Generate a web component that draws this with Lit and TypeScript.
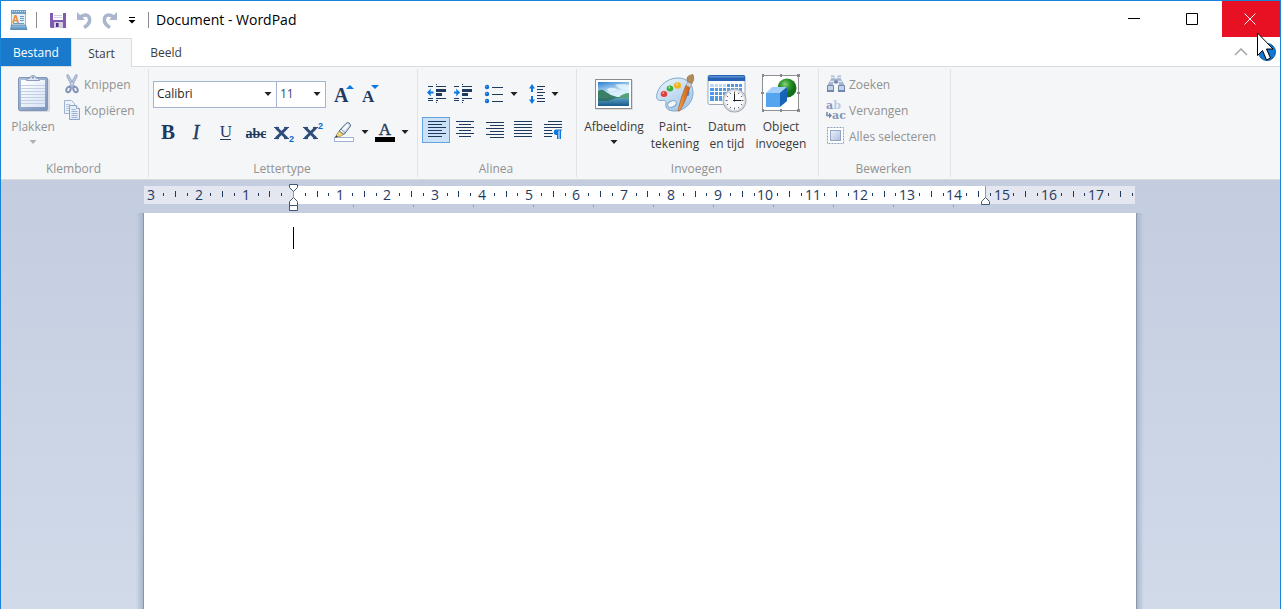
import { LitElement, html, svg, css } from "lit";
import { customElement, property } from "lit/decorators.js";

const NAVY = "#1f3a5f";
const BLUE = "#0a78e0";

const caret = (color = "#222") => html`<svg class="caret" width="8" height="4" viewBox="0 0 8 4" aria-hidden="true">
  <path d="M0.500 0h7L4 4z" fill=${color} /></svg>`;

/* Rows of text drawn as horizontal bars: [x, y, width, height] */
const bars = (rows: number[][]) =>
  rows.map(([x, y, w, h = 1]) => svg`<rect x=${x} y=${y} width=${w} height=${h} fill=${NAVY} />`);

const lines = (rows: number[][]) =>
  html`<svg width="20" height="20" viewBox="0 0 20 20" shape-rendering="crispEdges" aria-hidden="true">${bars(rows)}</svg>`;

const alignIcons = {
  left: lines([[2, 1, 18], [2, 4, 14], [2, 7, 18], [2, 10, 14], [2, 13, 18], [2, 16, 14]]),
  center: lines([[1, 1, 18], [4, 4, 12], [1, 7, 18], [4, 10, 12], [1, 13, 18], [4, 16, 12]]),
  right: lines([[2, 2, 18], [6, 5, 14], [2, 8, 18], [6, 11, 14], [2, 14, 18], [6, 17, 14]]),
  justify: lines([[1, 1, 18], [1, 4, 18], [1, 7, 18], [1, 10, 18], [1, 13, 18], [1, 16, 18]]),
};

const paragraphIcon = html`<svg width="22" height="20" viewBox="0 0 22 20" aria-hidden="true">
  <g shape-rendering="crispEdges">${bars([[7, 1, 14], [3, 4, 18], [3, 7, 18], [3, 10, 8], [3, 13, 9], [3, 16, 8]])}</g>
  <path d="M21 9.500h-6.500a3 3 0 0 0 0 5.500h1.500v4h1.500v-8.500h1v8.500h1.500v-8.500h1z" fill=${BLUE} />
</svg>`;

const indentIcon = (more: boolean) => html`<svg width="20" height="20" viewBox="0 0 20 20" aria-hidden="true">
  <g shape-rendering="crispEdges">${bars([
    [1, 2, 5], [9, 2, 10], [9, 5, 10, 3], [9, 9, 6, 3], [1, 14, 5], [9, 14, 10], [1, 16, 5], [9, 16, 2], [9, 18, 1], [9, 0, 1],
  ])}</g>
  <path d=${more ? "M7 8.500 3 4.500l.5 3H1v2h2.500l-.5 3z" : "M0 8.500l4-4-.5 3H6.500v2h-3l.5 3z"} fill=${BLUE} />
</svg>`;

const bulletsIcon = html`<svg width="20" height="20" viewBox="0 0 20 20" aria-hidden="true">
  ${[3, 10, 17].map((y) => svg`<circle cx="3" cy=${y} r="2.200" fill="#0a6cd6" /><circle cx="2.500" cy=${y - 0.5} r="0.8" fill="#6db5f5" />`)}
  <g shape-rendering="crispEdges">${bars([[8, 3, 11], [8, 10, 11], [8, 17, 11]])}</g>
</svg>`;

const spacingIcon = html`<svg width="16" height="20" viewBox="0 0 16 20" aria-hidden="true">
  <path d="M3 0l3 4.500H4V8H2V4.500H0zM3 20l3-4.500H4V12H2v3.500H0z" fill=${BLUE} />
  <g shape-rendering="crispEdges">${bars([[8, 2, 8], [8, 5, 6], [8, 8, 8], [8, 11, 6], [8, 14, 8], [8, 17, 8]])}</g>
</svg>`;

const highlightIcon = html`<svg width="22" height="22" viewBox="0 0 22 22" aria-hidden="true">
  <rect x="1.500" y="16.500" width="19" height="4" fill="#fff" stroke="#9fb3d0" />
  <path d="M6 10 13 2.500q1.500-1.500 3-.5t1.500 3L11 13.500z" fill="#dfe8f2" stroke="#49627f" />
  <path d="M8.500 10.500 15 4" stroke="#fff" stroke-width="1.500" />
  <path d="M8 8l4.500 4" stroke="#7d94b2" />
  <path d="M6 10l4.500 3.500-3.500 2-4.500.8L4 13z" fill="#f0d878" stroke="#8a8250" stroke-width=".7" />
  <path d="M2 16.500l1.300-2.200 1.500 1.500z" fill="#333" />
</svg>`;

const clipboardIcon = html`<svg width="34" height="38" viewBox="0 0 34 38" aria-hidden="true">
  <defs>
    <linearGradient id="cb" x2="1" y2="1"><stop stop-color="#aebfda" /><stop offset="1" stop-color="#7f95bb" /></linearGradient>
    <linearGradient id="cp" x2="1" y2="1"><stop stop-color="#fff" /><stop offset="1" stop-color="#d7e4f5" /></linearGradient>
  </defs>
  <rect x="3" y="5" width="31" height="33" rx="2" fill="#d5dae2" />
  <rect x="2.500" y="3.500" width="29" height="33" rx="1.500" fill="url(#cb)" stroke="#8296b9" />
  <rect x="5" y="6" width="24" height="27" fill="url(#cp)" />
  <path d="M5 11.500h24M5 14.500h24M5 17.500h24M5 20.500h24M5 23.500h24M5 26.500h24M5 29.500h24" stroke="#c1d0e6" />
  <path d="M10.500 6.500q0-2.500 3.500-2.500 .5-2.500 3-2.500t3 2.500q3.500 0 3.500 2.500z" fill="#dce5f2" stroke="#8a9dbd" />
  <circle cx="17" cy="3.500" r="1" fill="#7086aa" />
</svg>`;

const scissorsIcon = html`<svg width="18" height="20" viewBox="0 0 18 20" aria-hidden="true">
  <path d="M3 0.500 4.500 1l6 11-2 1.500L3 3zM13 .5l-1.500.5-6 11 2 1.500L13 3z" fill="#b7c6de" stroke="#92a5c3" stroke-width=".8" />
  <ellipse cx="4.500" cy="15.500" rx="2" ry="2.800" transform="rotate(25 4.500 15.500)" fill="none" stroke="#8194b7" stroke-width="2" />
  <ellipse cx="11.500" cy="15.500" rx="2" ry="2.800" transform="rotate(-25 11.500 15.500)" fill="none" stroke="#8194b7" stroke-width="2" />
</svg>`;

const copyIcon = html`<svg width="18" height="20" viewBox="0 0 18 20" aria-hidden="true">
  <path d="M.5.5h7l3 3v10H.5z" fill="#edf3fb" stroke="#9fb2d0" />
  <path d="M2 4.500h4M2 6.500h3M2 8.500h3M2 10.500h3" stroke="#b5c5de" />
  <path d="M5.500 5.500h7l3 3v11h-10z" fill="#e7effa" stroke="#8ea3c6" />
  <path d="M12.500 5.500v3h3" fill="#fff" stroke="#8ea3c6" />
  <path d="M7.500 9.500h4M7.500 11.500h6M7.500 13.500h6M7.500 15.500h6M7.500 17.500h6" stroke="#9fb2d0" />
</svg>`;

const pictureIcon = html`<svg width="38" height="40" viewBox="0 0 38 40" aria-hidden="true">
  <defs>
    <linearGradient id="sky" x2="0.300" y2="1"><stop stop-color="#2b7fd0" /><stop offset=".55" stop-color="#d8f0fb" /></linearGradient>
    <linearGradient id="sea" x2="0" y2="1"><stop stop-color="#5d9fbd" /><stop offset="1" stop-color="#175a8e" /></linearGradient>
  </defs>
  <rect x="1" y="7" width="37" height="30" fill="#d9dbdf" />
  <rect x=".5" y="6.500" width="36" height="29" fill="#fff" stroke="#8c8c8c" />
  <rect x="3" y="9" width="31" height="24" fill="url(#sky)" />
  <path d="M20 12q6-2 14 0v4q-7 2-14-4zM12 16q6-3 11 1l-9 2z" fill="#e8f6fd" opacity=".8" />
  <path d="M3 18q4-3 8 1l5 3 6 2h12v2H3z" fill="#3a7f68" />
  <path d="M24 24q5-4 10-4v5H24z" fill="#57a078" />
  <rect x="3" y="25" width="31" height="8" fill="url(#sea)" />
  <path d="M3 25h18l-8 3H3z" fill="#24654f" opacity=".7" />
</svg>`;

const paletteIcon = html`<svg width="40" height="40" viewBox="0 0 40 40" aria-hidden="true">
  <defs>
    <linearGradient id="pal" x2=".6" y2="1"><stop stop-color="#eef6fd" /><stop offset="1" stop-color="#a4c8e8" /></linearGradient>
    <linearGradient id="br" x2="1"><stop stop-color="#f6a24a" /><stop offset="1" stop-color="#c65a14" /></linearGradient>
  </defs>
  <path d="M23 5C13 5 5 12 2.500 19 .5 25 2 28 6 27.500q5-1 5 2Q9 37 18 38c11 1 20-8 20-18C38 11 32 5 23 5z" fill="url(#pal)" stroke="#7fa8cc" />
  <ellipse cx="17" cy="31" rx="4.500" ry="3" transform="rotate(-25 17 31)" fill="#f5f6f7" stroke="#7fa8cc" />
  <ellipse cx="9" cy="21" rx="3.300" ry="3" fill="#e23c3c" /><circle cx="8.300" cy="20" r="1" fill="#ff9c9c" />
  <ellipse cx="15" cy="15.500" rx="3.300" ry="3" fill="#3fae3f" /><circle cx="14.300" cy="14.500" r="1" fill="#a5e69a" />
  <ellipse cx="22.500" cy="12.500" rx="3.500" ry="3.300" fill="#f5b21a" /><circle cx="22" cy="11.500" r="1" fill="#ffe69a" />
  <ellipse cx="33" cy="20" rx="1.500" ry="3" fill="#4f93d8" />
  <path d="M33 12.500 35 14Q30 30 24.500 38q-2 1-1-2.500Q26 24 31 12z" fill="url(#br)" stroke="#a34c12" stroke-width=".6" />
  <path d="M31 12.500 33 8.500l4 2-2 4z" fill="#c9cdd2" stroke="#858b92" stroke-width=".5" />
  <path d="M32.500 8.500Q30 2.500 38 1.500q2 5-1 9z" fill="#b08c5c" stroke="#8a6a3e" stroke-width=".6" />
</svg>`;

const dateIcon = html`<svg width="40" height="40" viewBox="0 0 40 40" aria-hidden="true">
  <rect x="1" y="2.500" width="37" height="29" rx="1.500" fill="#fff" stroke="#9aa5b5" />
  <path d="M1 8V4q0-2 2-2h33q2 0 2 2v4z" fill="#2763b4" /><path d="M2 3h35v1.500H2z" fill="#5b8fd2" />
  <g shape-rendering="crispEdges">
    <path d="M3 11h16v4H3z" fill="#bfd9f5" />
    <path d="M19 11h16v4H19zM3 15h32v8H3zM3 23h14v5H3z" fill="#4f9ae6" />
    <path d="M7.500 11v17M11.500 11v17M15.500 11v17M19.500 11v12M23.500 11v12M27.500 11v12M31.500 11v12M3 14.500h32M3 18.500h32M3 22.500h32" stroke="#fff" />
  </g>
  <circle cx="27.500" cy="27.500" r="12" fill="#a5abb4" />
  <circle cx="27.500" cy="27.500" r="11" fill="#d9dde3" />
  <circle cx="27.500" cy="27.500" r="9.500" fill="#fbfcfd" />
  <path d="M27.500 18.500v2M27.500 34.500v2M18.500 27.500h2M34.500 27.500h2M23 19.700l.8 1.400M32 19.700l-.8 1.400M19.700 23l1.400.8M35.300 23l-1.400.8M19.700 32l1.400-.8M35.300 32l-1.400-.8M23 35.300l.8-1.400M32 35.300l-.8-1.400" stroke="#555" stroke-width=".9" />
  <path d="M27.500 20.500v8M26 27.500h8" stroke="#222" />
</svg>`;

const objectIcon = html`<svg width="40" height="40" viewBox="0 0 40 40" aria-hidden="true">
  <defs><radialGradient id="ball" cx=".4" cy=".3"><stop stop-color="#8ed37c" /><stop offset=".5" stop-color="#2f9a2f" /><stop offset="1" stop-color="#137018" /></radialGradient></defs>
  <rect x="1.500" y="2.500" width="36" height="35" fill="#fff" stroke="#8f8f93" />
  <g fill="#8a8a8e" shape-rendering="crispEdges">
    <path d="M1 1h2v3H1zM36 1h3v3h-3zM1 36h2v3H1zM36 36h3v3h-3zM19 1h2v3h-2zM19 36h2v3h-2zM0 19h3v2H0zM36 19h3v2h-3z" />
  </g>
  <circle cx="26" cy="15" r="9.500" fill="url(#ball)" />
  <path d="M5 20h14v14H5z" fill="#55a5ee" /><path d="M5 20l6-6h15l-7 6z" fill="#a3d0fa" /><path d="M19 20l7-6v14l-7 6z" fill="#1763b8" />
</svg>`;

const findIcon = html`<svg width="20" height="18" viewBox="0 0 20 18" aria-hidden="true">
  <path d="M5 .5h3.500v3h3v-3H15V4l3 5v4h-5V8H7v5H2V9l3-5z" fill="#a3b4cf" />
  <path d="M1.500 10.500h6v6h-6zM12.500 10.500h6v6h-6z" fill="#c5d2e5" stroke="#7187ad" />
  <path d="M5 2.500h3M12 2.500h3M4 6.500h4M12 6.500h4" stroke="#e0e8f2" stroke-width="1.500" />
  <path d="M8.500 5.500h3v3h-3z" fill="#6b82a8" /><path d="M1 16h7M12 16h7" stroke="#7187ad" stroke-width="2" />
</svg>`;

const replaceIcon = html`<svg width="20" height="22" viewBox="0 0 20 22" aria-hidden="true">
  <g font-family="'DejaVu Serif', serif" font-weight="bold" font-size="11">
    <text x="0" y="10" fill="#8095b8">a<tspan fill="#bccae0">b</tspan></text>
    <text x="6" y="20" fill="#8095b8">ac</text>
  </g>
  <path d="M1 13v3.500h3" fill="none" stroke="#7086aa" stroke-width="1.500" /><path d="M3 13.500 6 16.500l-3 3z" fill="#7086aa" />
</svg>`;

const selectAllIcon = html`<svg width="20" height="20" viewBox="0 0 20 20" aria-hidden="true">
  <defs><linearGradient id="sel" x2="1" y2="1"><stop stop-color="#edf3fb" /><stop offset="1" stop-color="#aebfdb" /></linearGradient></defs>
  <rect x="1.500" y="1.500" width="16" height="16" fill="#fff" stroke="#8ba0c0" stroke-dasharray="2 1" />
  <rect x="4.500" y="4.500" width="10" height="10" fill="url(#sel)" stroke="#91a5c7" />
</svg>`;

const appIcon = html`<svg width="18" height="20" viewBox="0 0 18 20" aria-hidden="true">
  <defs><linearGradient id="app" x2="0" y2="1"><stop stop-color="#9fc8e4" /><stop offset="1" stop-color="#4e8dbb" /></linearGradient></defs>
  <path d="M1.500 1.500h14v14h-14z" fill="#e3f0f9" stroke="#8fb9d6" />
  <path d="M1 0h15v4H1z" fill="#6d9fc4" /><path d="M2 1.500h13" stroke="#c8e4f4" stroke-dasharray="1 1" />
  <text x="2" y="13" font-family="'Liberation Sans', sans-serif" font-weight="bold" font-size="10" fill="#ef8a26">A</text>
  <path d="M10 6.500h4M10 8.500h4M10 10.500h4M3 13.500h11" stroke="#6c9cc2" />
  <path d="M1.500 15h14l1.500 4.500H.5z" fill="url(#app)" stroke="#4379a3" stroke-width=".7" />
</svg>`;

const saveIcon = html`<svg width="16" height="16" viewBox="0 0 16 16" aria-hidden="true">
  <path d="M0 1h16v15H1l-1-1z" fill="#7f5cb0" /><path d="M3 1h10v7H3z" fill="#fff" />
  <path d="M4 3.500h8M4 5.500h8" stroke="#d4cbe5" /><path d="M4 10h9v6H4z" fill="#d5cde3" /><path d="M6 11h2.500v4H6z" fill="#4e2f80" />
</svg>`;

const undoIcon = (flip = false) => html`<svg width="16" height="18" viewBox="0 0 16 18" aria-hidden="true">
  <g transform=${flip ? "translate(16 0) scale(-1 1)" : ""}>
    <path d="M4 6Q12 1.500 13.500 7.500q1 5.500-5.500 9" fill="none" stroke="#a9b6cd" stroke-width="3.500" />
    <path d="M1 1v8h8z" fill="#a9b6cd" />
  </g>
</svg>`;

/* A letter with an optional small index at its lower or upper right */
const scriptIcon = (indexY: number) => html`<svg width="22" height="26" viewBox="0 0 22 26" aria-hidden="true">
  <path d="M3 8.500 14 19.500M14 8.500 3 19.500" stroke="#2c4d7c" stroke-width="3" />
  <path d="M1 8.500h5M11 8.500h5M1 19.500h5M11 19.500h5" stroke="#2c4d7c" />
  <text x="16" y=${indexY} font-family="Liberation Sans, sans-serif" font-weight="bold" font-size="9" fill="#0a66d0">2</text>
</svg>`;

@customElement("ribbon-group")
export class RibbonGroup extends LitElement {
  @property() label = "";

  static styles = css`
    :host { display: flex; flex-direction: column; border-right: 1px solid #e2e3e4; margin: 2px 0; box-sizing: border-box; flex: none; }
    .body { flex: 1; padding-top: 2px; }
    .name { text-align: center; color: #929292; line-height: 16px; padding-right: 2px; }
  `;

  render() {
    return html`<div class="body"><slot></slot></div><div class="name">${this.label}</div>`;
  }
}

@customElement("page-ruler")
export class PageRuler extends LitElement {
  static styles = css`
    :host { display: block; height: 33px; overflow: hidden; }
    svg { display: block; }
    .num { font: 14px "Open Sans", sans-serif; fill: #1f3a5f; text-anchor: middle; }
  `;

  render() {
    const origin = 149;
    const right = 841;
    const width = 991;
    const quarter = 47.244 / 4;
    const marks = [];
    for (let i = -12; i <= 71; i++) {
      const x = Math.round(origin + i * quarter);
      if (i === 0 || x > width) continue;
      if (i % 4 === 0) marks.push(svg`<text class="num" x=${x} y="20">${Math.abs(i / 4)}</text>`);
      else if (i % 2 === 0) marks.push(svg`<rect x=${x} y="11" width="1" height="6" fill=${NAVY} />`);
      else marks.push(svg`<rect x=${x} y="13" width="1" height="3" fill=${NAVY} />`);
    }
    const stops = Array.from({ length: 11 }, (_, i) => origin + 60 * (i + 1));
    return html`<svg width="992" height="33" viewBox="0 0 992 33" role="img" aria-label="Liniaal">
      <rect x="0" y="6" width=${width} height="18" fill="#e4e7ef" />
      <rect x=${origin} y="6" width=${right - origin} height="18" fill="#fff" />
      ${marks}
      ${stops.map((x) => svg`<rect x=${x} y="25" width="1" height="2" fill="#8a9bb5" />`)}
      <path d="M149.500 11v10M841.500 6v14" stroke="#8a9bb5" />
      <g fill="#fff" stroke="#3f5878">
        <path d="M145.500 4.500h8v3l-4 4-4-4z" /><path d="M149.500 17.500l4 4v4h-8v-4z" /><path d="M145.500 25.500h8v5h-8z" />
        <path d="M841.500 17.500l4 4v3h-8v-3z" />
      </g>
    </svg>`;
  }
}

@customElement("app-root")
export class AppRoot extends LitElement {
  static styles = css`
    :host {
      display: flex; flex-direction: column; box-sizing: border-box; height: 100vh; min-height: 320px; overflow: hidden;
      border: 1px solid #1883d7; border-bottom: 0; background: #fff; color: #3c3c3c;
      font: 12px/17px "Open Sans", "Noto Sans", sans-serif; position: relative;
    }
    button, select, textarea { font: inherit; color: inherit; background: none; border: 0; padding: 0; margin: 0; border-radius: 0; }
    button { display: flex; align-items: center; justify-content: center; white-space: nowrap; }
    svg { display: block; flex: none; }
    .titlebar { display: flex; height: 37px; flex: none; }
    .quick { display: flex; align-items: center; padding-left: 9px; gap: 8px; }
    .history { display: flex; align-items: center; gap: 10px; padding-right: 4px; }
    .rule { width: 1px; height: 16px; background: #8c8c8c; margin-right: 5px; }
    .title { margin: 0; font-size: 14px; font-weight: 400; line-height: 37px; color: #000; flex: 1; padding-left: 2px; }
    .window { display: flex; }
    .window button { width: 58px; height: 36px; padding-right: 2px; }
    .window .close { background: #e81123; }
    .tabs { display: flex; height: 28px; flex: none; position: relative; }
    .tab { box-sizing: border-box; height: 28px; padding-top: 1px; }
    .file { width: 70px; background: #1979ca; color: #fff; }
    .start { width: 61px; height: 29px; background: #f5f6f7; border: 1px solid #dadbdc; border-bottom: 0; z-index: 1; }
    .view { width: 68px; }
    .side { margin-left: auto; display: flex; align-items: center; gap: 10px; padding-right: 4px; }
    .ribbon { display: flex; flex: none; height: 112px; background: #f5f6f7; border-top: 1px solid #dadbdc; border-bottom: 1px solid #dadbdc; }
    .clip { width: 148px; } .fonts { width: 269px; } .para { width: 159px; } .insert { width: 242px; } .edit { width: 132px; }
    .off { color: #929292; }
    .cols { display: flex; }
    .small { height: 26px; gap: 3px; }
    .stack { display: flex; flex-direction: column; align-items: flex-start; }
    .big { flex-direction: column; justify-content: flex-start; padding-top: 2px; gap: 5px; }
    .big .text { display: flex; flex-direction: column; align-items: center; }
    .big .caret { margin: 5px 0; }
    .paste { width: 62px; padding-top: 3px; gap: 6px; }
    .clip .cols { padding-left: 1px; }
    .clip .small { gap: 2px; }
    .row { display: flex; align-items: center; height: 26px; }
    .fonts .row { padding-left: 4px; }
    .combos { padding-top: 10px; gap: 8px; }
    .pair { display: flex; }
    .combo { display: grid; align-items: center; height: 27px; box-sizing: border-box; border: 1px solid #a3b5d0; background: #fff; }
    .combo select { grid-area: 1 / 1; appearance: none; height: 25px; padding: 0 0 2px 3px; color: #1e1e1e; outline: 0; }
    .combo .caret { grid-area: 1 / 1; justify-self: end; margin-right: 4px; pointer-events: none; }
    .family { width: 124px; } .size { width: 50px; margin-left: -1px; } .size select { color: #2b4c7e; }
    .grow { width: 20px; height: 26px; }
    .marks { padding-top: 12px; }
    .mark { width: 29px; height: 26px; }
    .split { display: flex; gap: 6px; margin-left: 6px; align-items: center; }
    .lists { padding: 10px 0 0 9px; gap: 6px; }
    .lists .split { margin-left: 5px; }
    .aligns { padding: 10px 0 0 4px; gap: 1px; }
    .align { width: 28px; height: 26px; box-sizing: border-box; border: 1px solid transparent; }
    .align.on { background: #cbe1f8; border-color: #64a2e0; }
    .insert .cols { padding-left: 5px; }
    .picture { width: 64px; } .paint { width: 58px; } .date { width: 46px; } .object { width: 62px; }
    .edit .stack { padding-left: 7px; }
    .desk { flex: 1; display: flex; flex-direction: column; align-items: center; background: linear-gradient(#c4cde0, #d0dae9); min-height: 0; padding-right: 1px; }
    .sheet { width: min(992px, 100%); display: flex; flex-direction: column; flex: 1; }
    .paper { flex: 1; display: grid; position: relative; background: #fff; }
    .paper::before, .paper::after { content: ""; position: absolute; top: 0; bottom: 0; width: 8px; }
    .paper::before { right: 100%; background: linear-gradient(to left, #8797ae 1px, #a9b7cc 1px, #a9b7cc00); }
    .paper::after { left: 100%; background: linear-gradient(to right, #8797ae 1px, #a9b7cc 1px, #a9b7cc00); }
    .paper textarea { grid-area: 1 / 1; resize: none; outline: 0; padding: 14px 149px; font: 18px/22px Lato, sans-serif; }
    .insertion { grid-area: 1 / 1; width: 1px; height: 22px; margin: 14px 149px; background: #000; pointer-events: none; }
    .pointer { position: absolute; right: 6px; top: 31px; pointer-events: none; }
  `;

  render() {
    return html`
      <header class="titlebar">
        <div class="quick">
          ${appIcon}<span class="rule"></span>
          <div class="history">
            <button aria-label="Opslaan">${saveIcon}</button>
            <button aria-label="Ongedaan maken">${undoIcon()}</button>
            <button aria-label="Opnieuw">${undoIcon(true)}</button>
            <button aria-label="Werkbalk aanpassen">
              <svg width="8" height="8" viewBox="0 0 8 8" aria-hidden="true"><path d="M1 1.500h6" stroke="#000" /><path d="M.5 4h7L4 7.500z" /></svg>
            </button>
          </div>
          <span class="rule"></span>
        </div>
        <h1 class="title">Document - WordPad</h1>
        <div class="window">
          <button aria-label="Minimaliseren"><svg width="12" height="12" viewBox="0 0 12 12"><path d="M0 5.500h12" stroke="#000" /></svg></button>
          <button aria-label="Maximaliseren"><svg width="12" height="12" viewBox="0 0 12 12"><path d="M.5.5h11v11H.5z" fill="none" stroke="#000" /></svg></button>
          <button class="close" aria-label="Sluiten"><svg width="12" height="12" viewBox="0 0 12 12"><path d="M.5.5l11 11M11.500.5l-11 11" stroke="#fff" /></svg></button>
        </div>
      </header>
      <nav class="tabs">
        <button class="tab file">Bestand</button>
        <button class="tab start">Start</button>
        <button class="tab view">Beeld</button>
        <div class="side">
          <button aria-label="Lint minimaliseren"><svg width="14" height="8" viewBox="0 0 14 8"><path d="M1 7l6-6 6 6" fill="none" stroke="#a6a6a6" stroke-width="1.500" /></svg></button>
          <button aria-label="Help"><svg width="18" height="18" viewBox="0 0 18 18"><circle cx="9" cy="9" r="8.500" fill="#0f78d4" stroke="#0a5ba5" /></svg></button>
        </div>
      </nav>
      <section class="ribbon">
        <ribbon-group class="clip" label="Klembord">
          <div class="cols off">
            <button class="big paste">${clipboardIcon}<span class="text"><span>Plakken</span>${caret("#b0b0b0")}</span></button>
            <div class="stack">
              <button class="small">${scissorsIcon}Knippen</button>
              <button class="small">${copyIcon}Kopiëren</button>
            </div>
          </div>
        </ribbon-group>
        <ribbon-group class="fonts" label="Lettertype">
          <div class="row combos">
            <div class="pair">
              <div class="combo family"><select aria-label="Lettertypefamilie"><option>Calibri</option></select>${caret()}</div>
              <div class="combo size"><select aria-label="Tekengrootte"><option>11</option></select>${caret()}</div>
            </div>
            <button class="grow" aria-label="Lettertype vergroten"><svg width="20" height="26" viewBox="0 0 20 26"><text x="0" y="21" font-family="Liberation Serif, serif" font-weight="bold" font-size="20" fill=${NAVY}>A</text><path d="M12 8h8l-4-4z" fill=${BLUE} /></svg></button>
            <button class="grow" aria-label="Lettertype verkleinen"><svg width="20" height="26" viewBox="0 0 20 26"><text x="0" y="21" font-family="Liberation Serif, serif" font-weight="bold" font-size="17" fill=${NAVY}>A</text><path d="M9 4h8l-4 4z" fill=${BLUE} /></svg></button>
          </div>
          <div class="row marks">
            <button class="mark" aria-label="Vet"><svg width="22" height="26" viewBox="0 0 22 26"><text x="11" y="20" text-anchor="middle" font-family="Liberation Serif, serif" font-weight="bold" font-size="21" fill=${NAVY}>B</text></svg></button>
            <button class="mark" aria-label="Cursief"><svg width="22" height="26" viewBox="0 0 22 26"><text x="10" y="20" text-anchor="middle" font-family="Liberation Serif, serif" font-style="italic" font-size="20" fill=${NAVY} stroke=${NAVY} stroke-width=".4">I</text></svg></button>
            <button class="mark" aria-label="Onderstrepen"><svg width="22" height="26" viewBox="0 0 22 26"><text x="11" y="18" text-anchor="middle" font-family="Liberation Serif, serif" font-size="17" fill=${NAVY}>U</text><path d="M5 20.500h11" stroke=${NAVY} /></svg></button>
            <button class="mark" aria-label="Doorhalen"><svg width="24" height="26" viewBox="0 0 24 26"><text x="13" y="19" text-anchor="middle" font-family="Liberation Serif, serif" font-weight="bold" font-size="14" fill=${NAVY}>abc</text><path d="M3 15.500h20" stroke=${NAVY} /></svg></button>
            <button class="mark" aria-label="Subscript">${scriptIcon(23)}</button>
            <button class="mark" aria-label="Superscript">${scriptIcon(10)}</button>
            <div class="split"><button aria-label="Markeringskleur">${highlightIcon}</button><button aria-label="Markeringskleur kiezen">${caret()}</button></div>
            <div class="split"><button aria-label="Tekstkleur"><svg width="20" height="26" viewBox="0 0 20 26"><text x="10" y="16" text-anchor="middle" font-family="Liberation Serif, serif" font-size="17" fill=${NAVY} stroke=${NAVY} stroke-width=".4">A</text><path d="M0 18h20v5H0z" /></svg></button><button aria-label="Tekstkleur kiezen">${caret()}</button></div>
          </div>
        </ribbon-group>
        <ribbon-group class="para" label="Alinea">
          <div class="row lists">
            <button aria-label="Inspringing verkleinen">${indentIcon(false)}</button>
            <button aria-label="Inspringing vergroten">${indentIcon(true)}</button>
            <div class="split"><button aria-label="Lijst">${bulletsIcon}</button><button aria-label="Lijststijl kiezen">${caret()}</button></div>
            <div class="split"><button aria-label="Regelafstand">${spacingIcon}</button><button aria-label="Regelafstand kiezen">${caret()}</button></div>
          </div>
          <div class="row aligns">
            <button class="align on" aria-label="Links uitlijnen">${alignIcons.left}</button>
            <button class="align" aria-label="Centreren">${alignIcons.center}</button>
            <button class="align" aria-label="Rechts uitlijnen">${alignIcons.right}</button>
            <button class="align" aria-label="Uitvullen">${alignIcons.justify}</button>
            <button class="align" aria-label="Alinea">${paragraphIcon}</button>
          </div>
        </ribbon-group>
        <ribbon-group class="insert" label="Invoegen">
          <div class="cols">
            <button class="big picture">${pictureIcon}<span class="text"><span>Afbeelding</span>${caret()}</span></button>
            <button class="big paint">${paletteIcon}<span class="text"><span>Paint-</span><span>tekening</span></span></button>
            <button class="big date">${dateIcon}<span class="text"><span>Datum</span><span>en tijd</span></span></button>
            <button class="big object">${objectIcon}<span class="text"><span>Object</span><span>invoegen</span></span></button>
          </div>
        </ribbon-group>
        <ribbon-group class="edit" label="Bewerken">
          <div class="stack off">
            <button class="small">${findIcon}Zoeken</button>
            <button class="small">${replaceIcon}Vervangen</button>
            <button class="small">${selectAllIcon}Alles selecteren</button>
          </div>
        </ribbon-group>
      </section>
      <main class="desk">
        <div class="sheet">
          <page-ruler></page-ruler>
          <div class="paper"><textarea aria-label="Document"></textarea><span class="insertion"></span></div>
        </div>
      </main>
      <svg class="pointer" width="18" height="30" viewBox="0 0 18 30" aria-hidden="true">
        <path d="M1.500 1v22.500l5-5 4 9.500 4-2-4-9h6.500z" fill="#fff" stroke="#000" />
      </svg>
    `;
  }
}
